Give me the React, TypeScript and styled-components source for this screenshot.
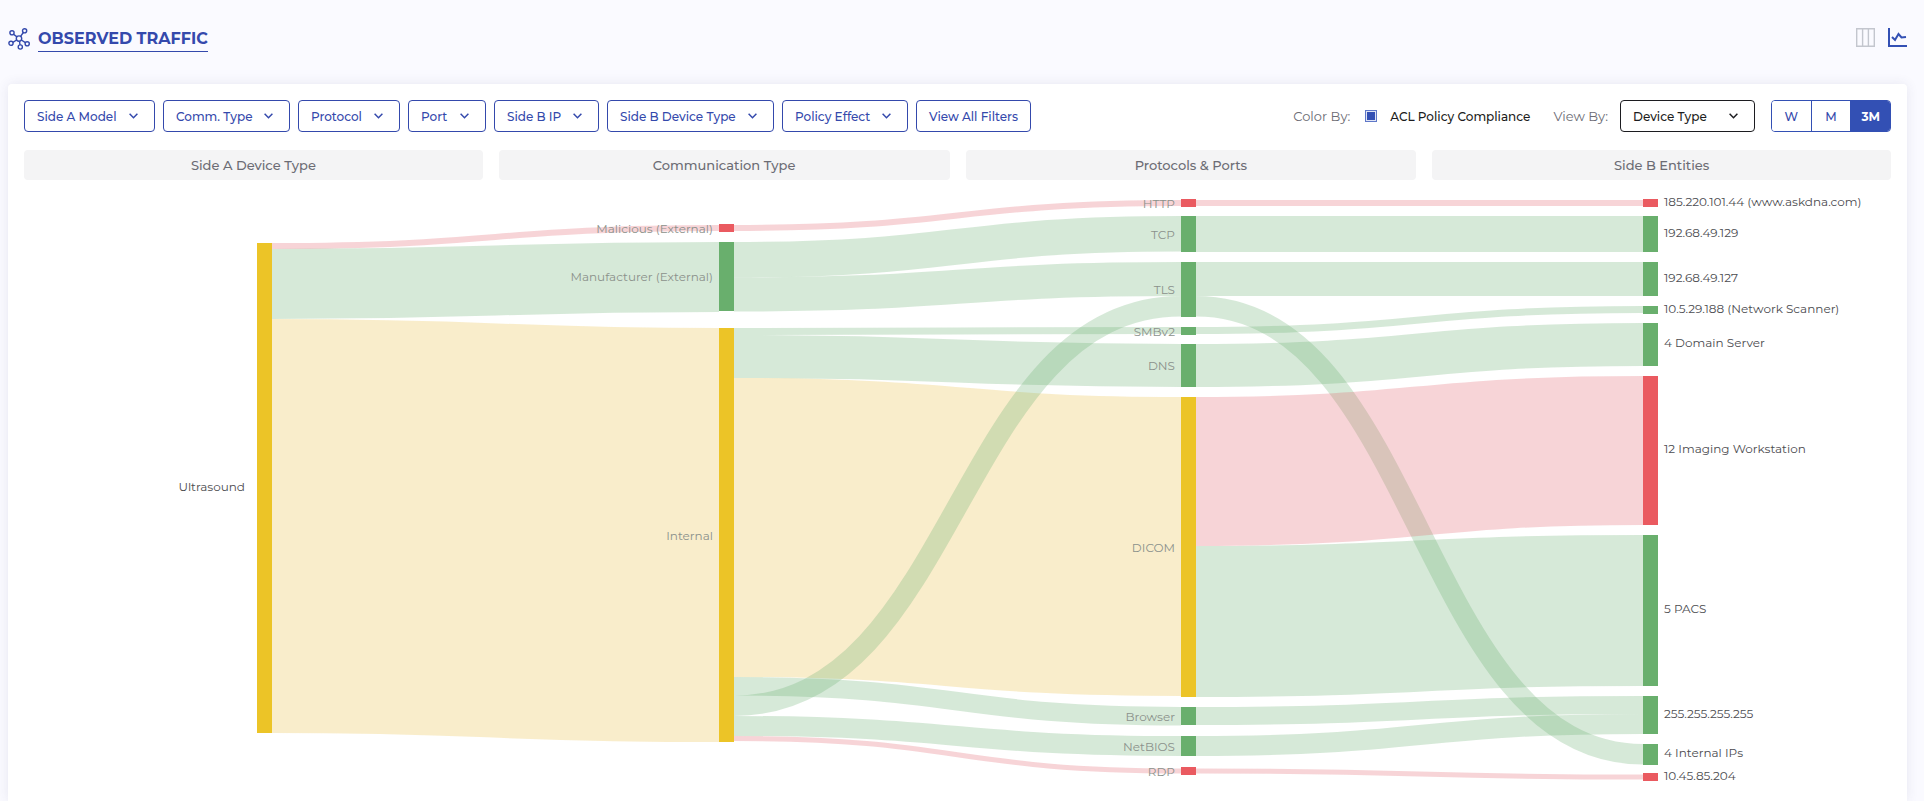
import React from 'react';
import styled, { createGlobalStyle, css } from 'styled-components';

const color = {
  primary: '#3350b4',
  primaryText: '#3449ac',
  ink: '#1c1c20',
  muted: '#6c6c74',
  page: '#fafaff',
  green: '#69af6d',
  red: '#ea5a60',
  yellow: '#ecc427',
};

const linkColor = {
  green: '#67ae6f',
  red: '#e1606b',
  yellow: '#e9bc3e',
};

const GlobalStyle = createGlobalStyle`
  *, *::before, *::after { box-sizing: border-box; }
  body {
    margin: 0;
    background: ${color.page};
    color: ${color.ink};
    font-family: Montserrat, Inter, "Liberation Sans", sans-serif;
    font-size: 12px;
  }
  button, input, select { font: inherit; color: inherit; margin: 0; }
`;

const Page = styled.div`
  min-height: 100vh;
  display: flex;
  flex-direction: column;
  padding: 0 17px 0 8px;
`;

const Header = styled.header`
  display: flex;
  align-items: flex-start;
  justify-content: space-between;
  height: 84px;
  padding-top: 28px;
`;

const TitleGroup = styled.div`
  display: flex;
  gap: 8px;
`;

const Title = styled.h1`
  margin: 0;
  padding-bottom: 2px;
  border-bottom: 1px solid ${color.primaryText};
  color: ${color.primaryText};
  font-size: 16px;
  font-weight: 700;
  line-height: 21px;
`;

const ViewSwitch = styled.div`
  display: flex;
  gap: 13px;
`;

const IconButton = styled.button<{ $active?: boolean }>`
  display: flex;
  padding: 0;
  border: 0;
  background: none;
  color: ${(p) => (p.$active ? color.primary : '#c3c6ce')};
`;

const Card = styled.main`
  flex: 1;
  padding: 16px 16px 0;
  background: #fff;
  border-radius: 4px 4px 0 0;
  box-shadow: 0 0 12px rgba(60, 60, 110, 0.1);
`;

const Toolbar = styled.div`
  display: flex;
  justify-content: space-between;
  gap: 16px;
  margin-bottom: 18px;
`;

const Filters = styled.div`
  display: flex;
  gap: 8px;
`;

const FilterButton = styled.button<{ $width: number }>`
  display: flex;
  align-items: center;
  justify-content: space-between;
  height: 32px;
  min-width: ${(p) => p.$width}px;
  padding: 0 12px;
  border: 1px solid ${color.primaryText};
  border-radius: 4px;
  background: #fff;
  color: ${color.primaryText};
  font-weight: 500;
  white-space: nowrap;
  svg { margin-right: 4px; }
`;

const Controls = styled.div`
  display: flex;
  align-items: center;
  white-space: nowrap;
`;

const Caption = styled.span`
  color: ${color.muted};
  font-size: 13px;
`;

const Check = styled.input`
  appearance: none;
  width: 12px;
  height: 12px;
  border: 1px solid #5f78c8;
  &:checked {
    background: ${color.primary};
    box-shadow: inset 0 0 0 1px #dfe4f5;
  }
`;

const CheckLabel = styled.label`
  display: flex;
  align-items: center;
  gap: 13px;
  margin: 0 23px 0 15px;
  font-weight: 500;
`;

const SelectLabel = styled.label`
  display: flex;
  align-items: center;
  gap: 12px;
`;

const SelectBox = styled.span`
  display: grid;
  align-items: center;
  > * { grid-area: 1 / 1; }
  svg {
    justify-self: end;
    margin-right: 17px;
    pointer-events: none;
  }
`;

const Select = styled.select`
  appearance: none;
  width: 135px;
  height: 32px;
  padding: 0 12px;
  border: 1px solid ${color.ink};
  border-radius: 4px;
  background: #fff;
  font-weight: 500;
`;

const RangeGroup = styled.div`
  display: flex;
  width: 120px;
  height: 32px;
  margin-left: 16px;
  border: 1px solid ${color.primary};
  border-radius: 4px;
  overflow: hidden;
`;

const RangeButton = styled.button<{ $active: boolean }>`
  flex: 1;
  padding: 0;
  border: 0;
  background: #fff;
  color: ${color.primaryText};
  font-weight: 500;
  & + & { border-left: 1px solid ${color.primary}; }
  ${(p) =>
    p.$active &&
    css`
      background: ${color.primary};
      color: #fff;
      font-weight: 700;
    `}
`;

const Columns = styled.div`
  display: grid;
  grid-template-columns: repeat(4, 1fr);
`;

const ColumnTitle = styled.h2`
  margin: 0 8px;
  border-radius: 4px;
  background: #f4f4f5;
  color: ${color.muted};
  font-size: 13px;
  font-weight: 500;
  line-height: 30px;
  text-align: center;
  &:first-child { margin-left: 0; }
  &:last-child { margin-right: 0; }
`;

const Chart = styled.svg`
  display: block;
  width: 100%;
  height: auto;
`;

const Label = styled.text<{ $dim?: boolean }>`
  font-size: 12px;
  fill: ${(p) => (p.$dim ? '#8b918b' : '#4c4c50')};
`;

const Chevron = () => (
  <svg width="9" height="6" viewBox="0 0 9 6" fill="none" stroke="currentColor" strokeWidth="1.5" aria-hidden="true">
    <path d="M0.6 0.8 4.5 4.7 8.4 0.8" />
  </svg>
);

const NetworkIcon = () => (
  <svg width="22" height="22" viewBox="0 0 22 22" fill="none" stroke={color.primaryText} strokeWidth="1.4" aria-hidden="true">
    <circle cx="11" cy="10.6" r="2.7" />
    <circle cx="4" cy="4.8" r="2.1" />
    <circle cx="16.6" cy="2.8" r="2.1" />
    <circle cx="3" cy="15.3" r="2.1" />
    <circle cx="12.3" cy="19" r="2.1" />
    <circle cx="19.2" cy="15.8" r="2.1" />
    <path d="M5.6 6.2 8.9 8.9M15.3 4.5 12.6 8.4M4.9 14.4 8.6 12M12 16.9 11.5 13.3M17.4 14.7 13.3 12" />
  </svg>
);

const TableIcon = () => (
  <svg width="19" height="19" viewBox="0 0 19 19" fill="none" stroke="currentColor" strokeWidth="1.4" aria-hidden="true">
    <path d="M0.7 0.7H18.3V18.3H0.7ZM6.6 0.7V18.3M12.4 0.7V18.3" />
  </svg>
);

const ChartIcon = () => (
  <svg width="19" height="19" viewBox="0 0 19 19" fill="none" stroke="currentColor" strokeWidth="2" aria-hidden="true">
    <path d="M1 0V18H19" />
    <path d="M4 9 7 12 10.5 6 13.5 9.5 18 9" />
  </svg>
);

const filters = [
  { label: 'Side A Model', width: 131 },
  { label: 'Comm. Type', width: 127 },
  { label: 'Protocol', width: 102 },
  { label: 'Port', width: 78 },
  { label: 'Side B IP', width: 105 },
  { label: 'Side B Device Type', width: 167 },
  { label: 'Policy Effect', width: 126 },
];

const columns = ['Side A Device Type', 'Communication Type', 'Protocols & Ports', 'Side B Entities'];

type Tone = 'green' | 'red' | 'yellow';
const NODE_WIDTH = 15;
const columnX = [233, 695, 1157, 1619];

/* column, top, bottom, tone, label */
const nodes: [number, number, number, Tone, string][] = [
  [0, 63, 553, 'yellow', 'Ultrasound'],
  [1, 44, 52, 'red', 'Malicious (External)'],
  [1, 62, 131, 'green', 'Manufacturer (External)'],
  [1, 148, 562, 'yellow', 'Internal'],
  [2, 19, 27, 'red', 'HTTP'],
  [2, 36, 72, 'green', 'TCP'],
  [2, 82, 137, 'green', 'TLS'],
  [2, 147, 155, 'green', 'SMBv2'],
  [2, 164, 207, 'green', 'DNS'],
  [2, 217, 517, 'yellow', 'DICOM'],
  [2, 527, 545, 'green', 'Browser'],
  [2, 556, 576, 'green', 'NetBIOS'],
  [2, 587, 595, 'red', 'RDP'],
  [3, 19, 27, 'red', '185.220.101.44 (www.askdna.com)'],
  [3, 36, 72, 'green', '192.68.49.129'],
  [3, 82, 116, 'green', '192.68.49.127'],
  [3, 126, 134, 'green', '10.5.29.188 (Network Scanner)'],
  [3, 143, 186, 'green', '4 Domain Server'],
  [3, 196, 345, 'red', '12 Imaging Workstation'],
  [3, 355, 506, 'green', '5 PACS'],
  [3, 516, 554, 'green', '255.255.255.255'],
  [3, 564, 585, 'green', '4 Internal IPs'],
  [3, 593, 601, 'red', '10.45.85.204'],
];

/* source column, top at source, top at target, thickness, tone */
const links: [number, number, number, number, Tone][] = [
  [0, 63, 45, 6, 'red'],
  [0, 69, 62, 70, 'green'],
  [0, 139, 148, 414, 'yellow'],
  [1, 45, 20, 6, 'red'],
  [1, 62, 36, 35.5, 'green'],
  [1, 97.5, 82, 34, 'green'],
  [1, 148, 147, 7, 'green'],
  [1, 155, 164, 43, 'green'],
  [1, 198, 217, 299, 'yellow'],
  [1, 497, 527, 18.5, 'green'],
  [1, 515.5, 116, 20.5, 'green'],
  [1, 536, 556, 20, 'green'],
  [1, 556, 588.5, 5, 'red'],
  [2, 20, 20, 6, 'red'],
  [2, 36, 36, 36, 'green'],
  [2, 82, 82, 34, 'green'],
  [2, 116, 564, 20.5, 'green'],
  [2, 147, 126, 7, 'green'],
  [2, 164, 143, 43, 'green'],
  [2, 217, 196, 149, 'red'],
  [2, 366, 355, 151, 'green'],
  [2, 527, 516, 18, 'green'],
  [2, 556, 534, 20, 'green'],
  [2, 588.5, 594.5, 5, 'red'],
];

const linkPath = (column: number, from: number, to: number, thickness: number) => {
  const x0 = columnX[column] + NODE_WIDTH;
  const x1 = columnX[column + 1];
  const mid = (x0 + x1) / 2;
  const y0 = from + thickness / 2;
  const y1 = to + thickness / 2;
  return `M${x0} ${y0}C${mid} ${y0} ${mid} ${y1} ${x1} ${y1}`;
};

const labelX = (column: number) => {
  if (column === 3) return columnX[3] + NODE_WIDTH + 6;
  return columnX[column] - (column === 0 ? 12 : 6);
};

const labelY = (column: number, top: number, bottom: number) => {
  const middle = Math.floor((top + bottom) / 2);
  return middle + (column === 1 || column === 2 ? 5 : 3);
};

const Sankey = () => (
  <Chart viewBox="0 0 1867 620" role="img" aria-label="Observed traffic flow">
    {links.map(([column, from, to, thickness, tone], i) => (
      <path
        key={i}
        d={linkPath(column, from, to, thickness)}
        fill="none"
        stroke={linkColor[tone]}
        strokeOpacity={0.27}
        strokeWidth={thickness}
      />
    ))}
    {nodes.map(([column, top, bottom, tone, label]) => (
      <g key={label}>
        <rect x={columnX[column]} y={top} width={NODE_WIDTH} height={bottom - top} fill={color[tone]} />
        <Label
          $dim={column === 1 || column === 2}
          x={labelX(column)}
          y={labelY(column, top, bottom)}
          textAnchor={column === 3 ? 'start' : 'end'}
        >
          {label}
        </Label>
      </g>
    ))}
  </Chart>
);

export default function App() {
  const [range, setRange] = React.useState('3M');
  return (
    <>
      <GlobalStyle />
      <Page>
        <Header>
          <TitleGroup>
            <NetworkIcon />
            <Title>OBSERVED TRAFFIC</Title>
          </TitleGroup>
          <ViewSwitch>
            <IconButton type="button" aria-label="Table view"><TableIcon /></IconButton>
            <IconButton type="button" aria-label="Chart view" $active><ChartIcon /></IconButton>
          </ViewSwitch>
        </Header>
        <Card>
          <Toolbar>
            <Filters>
              {filters.map((f) => (
                <FilterButton key={f.label} type="button" $width={f.width}>
                  {f.label}
                  <Chevron />
                </FilterButton>
              ))}
              <FilterButton type="button" $width={115}>View All Filters</FilterButton>
            </Filters>
            <Controls>
              <Caption>Color By:</Caption>
              <CheckLabel>
                <Check type="checkbox" defaultChecked />
                ACL Policy Compliance
              </CheckLabel>
              <SelectLabel>
                <Caption>View By:</Caption>
                <SelectBox>
                  <Select defaultValue="Device Type">
                    <option>Device Type</option>
                  </Select>
                  <Chevron />
                </SelectBox>
              </SelectLabel>
              <RangeGroup role="group" aria-label="Time range">
                {['W', 'M', '3M'].map((r) => (
                  <RangeButton key={r} type="button" $active={range === r} onClick={() => setRange(r)}>
                    {r}
                  </RangeButton>
                ))}
              </RangeGroup>
            </Controls>
          </Toolbar>
          <Columns>
            {columns.map((c) => (
              <ColumnTitle key={c}>{c}</ColumnTitle>
            ))}
          </Columns>
          <Sankey />
        </Card>
      </Page>
    </>
  );
}
